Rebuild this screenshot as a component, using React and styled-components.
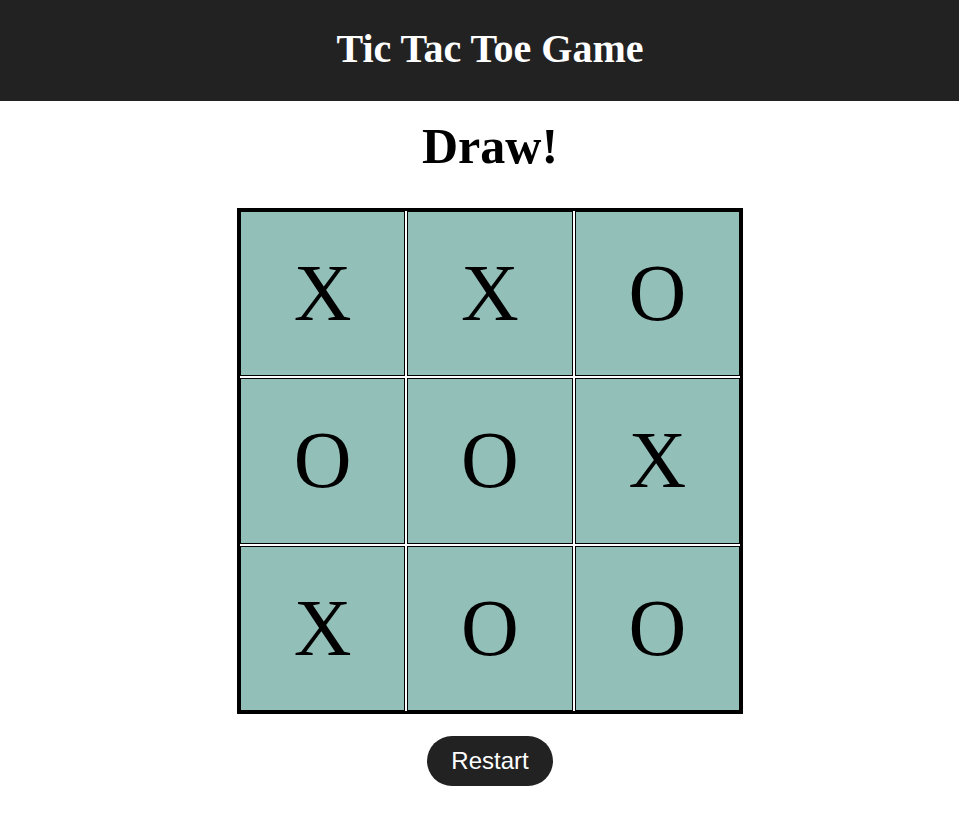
import React from 'react';
import styled, { createGlobalStyle } from 'styled-components';

const GlobalStyle = createGlobalStyle`
  html, body {
    margin: 0;
    padding: 0;
    background: #ffffff;
    font-family: "Liberation Serif", "Times New Roman", serif;
  }
`;

const board = ['X', 'X', 'O', 'O', 'O', 'X', 'X', 'O', 'O'];

const App = () => {
  return (
    <>
      <GlobalStyle />
      <Header>
        <Title>Tic Tac Toe Game</Title>
      </Header>
      <Main>
        <Status>Draw!</Status>
        <Board>
          {board.map((value, i) => (
            <Cell key={i}>{value}</Cell>
          ))}
        </Board>
        <RestartButton>Restart</RestartButton>
      </Main>
    </>
  );
};

const Header = styled.header`
  background-color: #222222;
  height: 101px;
  display: flex;
  align-items: center;
  justify-content: center;
  padding-left: 21px;
  padding-bottom: 4px;
  box-sizing: border-box;
`;

const Title = styled.h1`
  margin: 0;
  color: #ffffff;
  font-size: 40px;
  font-weight: bold;
`;

const Main = styled.main`
  display: flex;
  flex-direction: column;
  align-items: center;
  padding-left: 21px;
`;

const Status = styled.h2`
  margin: 18px 0 34px;
  font-size: 50px;
  font-weight: bold;
  line-height: 55px;
`;

const Board = styled.div`
  width: 500px;
  height: 500px;
  border: 3px solid #000000;
  background-color: #ffffff;
  display: grid;
  grid-template-columns: repeat(3, 1fr);
  grid-template-rows: repeat(3, 1fr);
  gap: 2px;
`;

const Cell = styled.div`
  border: 1px solid #000000;
  background-color: #93bfb9;
  display: flex;
  align-items: center;
  justify-content: center;
  font-size: 80px;
  color: #000000;
`;

const RestartButton = styled.button`
  margin-top: 22px;
  height: 50px;
  padding: 0 24px;
  border: none;
  border-radius: 25px / 50%;
  background-color: #222222;
  color: #ffffff;
  font-family: "Liberation Sans", Arial, sans-serif;
  font-size: 24px;
  cursor: pointer;
`;

export default App;
